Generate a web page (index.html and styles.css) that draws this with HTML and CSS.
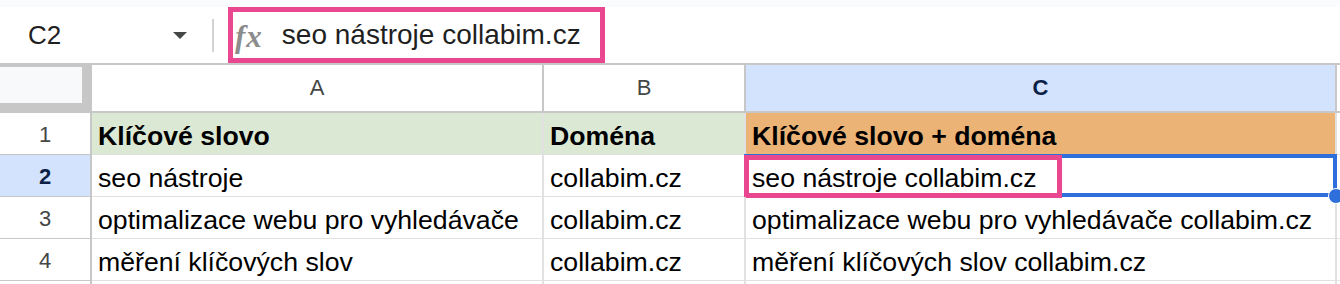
FILE: index.html
```html
<!DOCTYPE html>
<html lang="cs">
<head>
<meta charset="utf-8">
<link rel="stylesheet" href="styles.css">
</head>
<body>
<div class="topband"></div>
<div class="toolbar">
  <div class="namebox"><span class="cellref">C2</span><span class="caret"></span></div>
  <div class="sep"></div>
  <div class="formula"><span class="fx">fx</span><span class="ftext">seo nástroje collabim.cz</span></div>
</div>
<div class="sheet">
  <div class="corner"><div class="corner-in"></div></div>
  <div class="colhdr">A</div>
  <div class="colhdr">B</div>
  <div class="colhdr sel-hdr">C</div>
  <div class="colhdr"></div>

  <div class="rowhdr">1</div>
  <div class="cell bold green">Klíčové slovo</div>
  <div class="cell bold green">Doména</div>
  <div class="cell bold orange">Klíčové slovo + doména</div>
  <div class="cell"></div>

  <div class="rowhdr sel-row">2</div>
  <div class="cell">seo nástroje</div>
  <div class="cell">collabim.cz</div>
  <div class="cell active">seo nástroje collabim.cz<span class="selbox"></span><span class="hilite"></span><span class="handle"></span></div>
  <div class="cell"></div>

  <div class="rowhdr">3</div>
  <div class="cell">optimalizace webu pro vyhledávače</div>
  <div class="cell">collabim.cz</div>
  <div class="cell">optimalizace webu pro vyhledávače collabim.cz</div>
  <div class="cell"></div>

  <div class="rowhdr">4</div>
  <div class="cell">měření klíčových slov</div>
  <div class="cell">collabim.cz</div>
  <div class="cell">měření klíčových slov collabim.cz</div>
  <div class="cell"></div>

  <div class="rowhdr stub"></div>
  <div class="cell stub"></div>
  <div class="cell stub"></div>
  <div class="cell stub"></div>
  <div class="cell stub"></div>
</div>
</body>
</html>
```
FILE: styles.css
```css
html, body {
  margin: 0;
  padding: 0;
  background: #ffffff;
  width: 1340px;
  height: 284px;
  overflow: hidden;
  font-family: "Liberation Sans", Arial, sans-serif;
}

.topband {
  height: 7px;
  background: #f9fbfd;
}

.toolbar {
  height: 56px;
  display: flex;
  align-items: center;
  border-bottom: 2px solid #c7c7c7;
  background: #ffffff;
}

.namebox {
  width: 200px;
  box-sizing: border-box;
  padding: 0 13px 0 28px;
  display: flex;
  align-items: center;
  justify-content: space-between;
}

.cellref {
  font-size: 26px;
  color: #1f1f1f;
}

.caret {
  width: 0;
  height: 0;
  border-left: 7px solid transparent;
  border-right: 7px solid transparent;
  border-top: 7px solid #444746;
}

.sep {
  width: 2px;
  height: 33px;
  margin-left: 12px;
  background: #d3d3d3;
}

.formula {
  margin-left: 14px;
  width: 377px;
  height: 56px;
  box-sizing: border-box;
  border: 5px solid #e9478f;
  display: flex;
  align-items: center;
}

.fx {
  font-family: "Liberation Serif", "Times New Roman", serif;
  font-style: italic;
  font-weight: bold;
  font-size: 31px;
  letter-spacing: 1px;
  color: #8c8c8c;
  margin-left: 2px;
  line-height: 1;
  margin-top: 2px;
}

.ftext {
  font-size: 28px;
  color: #1f1f1f;
  margin-left: 19px;
}

.sheet {
  display: grid;
  grid-template-columns: 92px 452px 202px 591px 1fr;
  grid-template-rows: 48px repeat(4, 42px) 3px;
}

.corner {
  background: #c7c7c7;
  box-sizing: border-box;
  padding-top: 2px;
}

.corner-in {
  width: 82px;
  height: 36px;
  background: #f8f9fa;
}

.colhdr {
  box-sizing: border-box;
  border-right: 2px solid #c7c7c7;
  border-bottom: 2px solid #c7c7c7;
  display: flex;
  align-items: center;
  justify-content: center;
  font-size: 22px;
  color: #444746;
  background: #ffffff;
}

.sel-hdr {
  background: #d3e3fd;
  color: #0b1f47;
  font-weight: bold;
}

.rowhdr {
  box-sizing: border-box;
  border-right: 2px solid #c7c7c7;
  border-bottom: 1px solid #c7c7c7;
  display: flex;
  align-items: center;
  justify-content: center;
  font-size: 22px;
  color: #444746;
  padding-top: 2px;
}

.sel-row {
  background: #d3e3fd;
  color: #0b1f47;
  font-weight: bold;
}

.cell {
  position: relative;
  box-sizing: border-box;
  border-right: 2px solid #e1e1e1;
  border-bottom: 1px solid #e1e1e1;
  display: flex;
  align-items: flex-end;
  padding: 0 0 3px 6px;
  font-size: 26.67px;
  line-height: 30px;
  color: #000000;
  white-space: nowrap;
}

.stub {
  border-bottom: none;
  padding: 0;
}

.bold {
  font-weight: bold;
}

.green {
  background: #dbe9d4;
}

.orange {
  background: #ebb375;
}

.selbox {
  position: absolute;
  left: -2px;
  top: -1px;
  width: 593px;
  height: 43px;
  box-sizing: border-box;
  border: 4px solid #2f6fdc;
}

.hilite {
  position: absolute;
  left: -2px;
  top: 0;
  width: 318px;
  height: 43px;
  box-sizing: border-box;
  border: 5px solid #e9478f;
}

.handle {
  position: absolute;
  left: 582px;
  top: 33px;
  width: 16px;
  height: 16px;
  box-sizing: border-box;
  border-radius: 50%;
  background: #2f6fdc;
  border: 1px solid #ffffff;
  z-index: 2;
}
```
